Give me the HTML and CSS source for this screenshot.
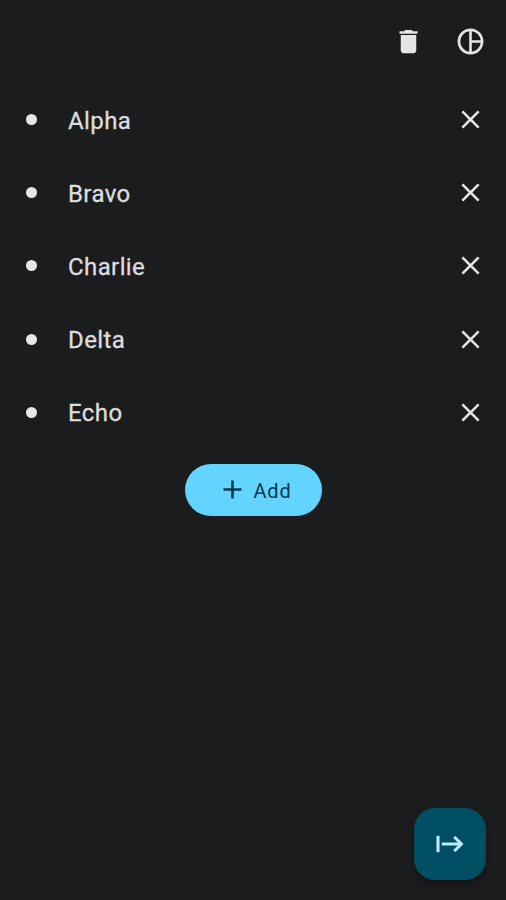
FILE: index.html
```html
<!DOCTYPE html>
<html lang="en">
<head>
<meta charset="utf-8">
<title>List</title>
<link rel="stylesheet" href="styles.css">
</head>
<body>
<svg class="defs" aria-hidden="true"><symbol id="close" viewBox="0 0 24 24"><path d="M19 6.41L17.59 5 12 10.59 6.41 5 5 6.41 10.59 12 5 17.59 6.41 19 12 13.41 17.59 19 19 17.59 13.41 12z"/></symbol></svg>
<div class="screen">
  <header class="toolbar">
    <svg class="icon" viewBox="0 0 24 24"><path d="M6 19c0 1.1.9 2 2 2h8c1.100 0 2-.9 2-2V7H6v12zM19 4h-3.500l-1-1h-5l-1 1H5v2h14V4z"/></svg>
    <svg class="icon" viewBox="0 0 24 24"><path fill-rule="evenodd" d="M12 2a10 10 0 1 0 0 20a10 10 0 0 0 0-20zM11 19.930a8 8 0 0 1 0-15.860zM13 4.070A8 8 0 0 1 19.930 11H13zM13 13h6.930A8 8 0 0 1 13 19.930z"/></svg>
  </header>
  <ul class="list">
    <li class="row"><span class="dot"></span><span class="label">Alpha</span><svg class="icon"><use href="#close"/></svg></li>
    <li class="row"><span class="dot"></span><span class="label">Bravo</span><svg class="icon"><use href="#close"/></svg></li>
    <li class="row"><span class="dot"></span><span class="label">Charlie</span><svg class="icon"><use href="#close"/></svg></li>
    <li class="row"><span class="dot"></span><span class="label">Delta</span><svg class="icon"><use href="#close"/></svg></li>
    <li class="row"><span class="dot"></span><span class="label">Echo</span><svg class="icon"><use href="#close"/></svg></li>
  </ul>
  <button class="add"><svg class="plus" viewBox="0 0 24 24"><path d="M19 13h-6v6h-2v-6H5v-2h6V5h2v6h6v2z"/></svg><span>Add</span></button>
  <button class="fab" aria-label="Next"><svg class="start" viewBox="0 0 24 24"><path d="M14.590 7.410L18.170 11H6v2h12.170l-3.590 3.590L16 18l6-6-6-6-1.410 1.410zM2 6v12h2V6H2z"/></svg></button>
</div>
</body>
</html>
```
FILE: styles.css
```css
* { box-sizing: border-box; }
body { margin: 0; background: #1b1c1d; font-family: Roboto, sans-serif; }
.defs { display: none; }
.screen {
  display: flex;
  flex-direction: column;
  height: 900px;
  padding-bottom: 20px;
  color: #dcddde;
}
.icon { width: 31px; height: 31px; fill: #e4e5e7; flex: none; }
.toolbar {
  display: flex;
  justify-content: flex-end;
  align-items: center;
  gap: 31px;
  height: 83px;
  padding-right: 20px;
}
.list { list-style: none; margin: 0; padding: 0; }
.row { display: flex; align-items: center; height: 73.200px; padding: 0 20px 0 26px; }
.dot { width: 11px; height: 11px; border-radius: 50%; background: #e6e7e9; }
.label { flex: 1; margin-left: 31px; padding-top: 2px; font-size: 24px; letter-spacing: 0.400px; -webkit-text-stroke: 0.300px #dcddde; }
button { border: 0; padding: 0; display: flex; align-items: center; justify-content: center; }
.add {
  align-self: center;
  width: 137px;
  height: 52px;
  margin: 15px 0 0 1px;
  padding-left: 2px;
  gap: 5px;
  border-radius: 26px;
  background: #62d4ff;
  color: #07384a;
  font: 400 20px Roboto, sans-serif;
  letter-spacing: 0.800px;
}
.add span { padding-top: 2px; }
.plus { width: 31px; height: 31px; fill: #07384a; }
.fab {
  align-self: flex-end;
  width: 72px;
  height: 72px;
  margin: auto 20px 0 0;
  border-radius: 21px;
  background: #004e63;
  box-shadow: 0 4px 8px rgba(0, 0, 0, 0.3);
}
.start { width: 32px; height: 32px; fill: #bdebff; stroke: #bdebff; stroke-width: 0.300; }
```
